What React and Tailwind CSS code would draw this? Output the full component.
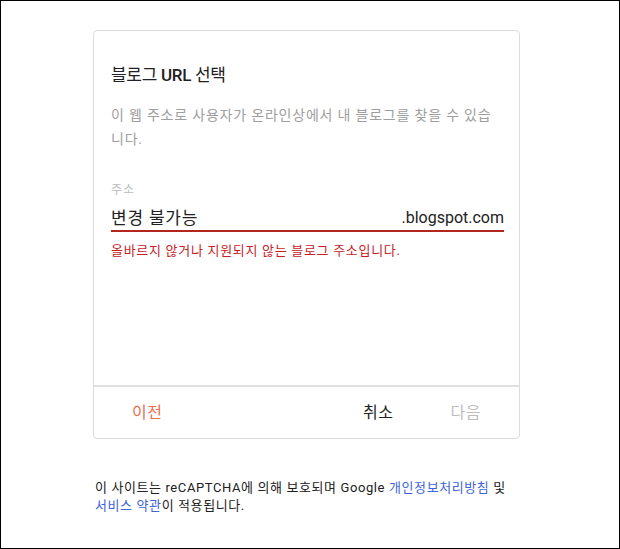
import React from 'react';

const font = { fontFamily: 'Roboto, "Noto Sans CJK KR", "Noto Sans", sans-serif' };

const App = () => {
    return (
        <div className="w-[620px] h-[549px] border border-black bg-white overflow-hidden" style={font}>
            <div className="ml-[92px] mt-[29px] w-[427px]">
                <div className="h-[409px] rounded-[4px] border border-[#dadce0] flex flex-col">
                    <div className="flex-1 pl-[17px] pr-[15px] pt-[32px]">
                        <h2 className="text-[17px] leading-[24px] tracking-[-0.3px] text-[#212121]">
                            블로그 <span className="font-medium">URL</span> 선택
                        </h2>
                        <p className="mt-[16px] text-[14px] leading-[24px] tracking-[0.8px] text-[#9e9e9e]">
                            이 웹 주소로 사용자가 온라인상에서 내 블로그를 찾을 수 있습니다.
                        </p>
                        <div className="mt-[31px] text-[12px] leading-[16px] tracking-[1px] text-[#bdbdbd]">주소</div>
                        <div className="mt-[8px] flex items-end justify-between border-b-2 border-[#b3261e] h-[26px]">
                            <span className="text-[17px] leading-[24px] tracking-[0.8px] text-[#212121]">변경 불가능</span>
                            <span className="text-[16px] leading-[24px] text-[#212121]">.blogspot.com</span>
                        </div>
                        <div className="mt-[11px] text-[13px] leading-[16px] tracking-[0.7px] text-[#c5221f]">
                            올바르지 않거나 지원되지 않는 블로그 주소입니다.
                        </div>
                    </div>
                    <div className="h-[53px] border-t-2 border-[#e0e0e0] flex items-center px-[18px]">
                        <button className="px-5 text-[16px] tracking-[0.5px] text-[#e8704f]">이전</button>
                        <div className="flex-1" />
                        <button className="px-5 text-[16px] tracking-[0.5px] text-[#212121]">취소</button>
                        <button className="ml-[17px] px-5 text-[16px] tracking-[0.5px] text-[#bdbdbd]">다음</button>
                    </div>
                </div>
                <div className="mt-[40px] ml-[2px] text-[13px] leading-[18px] tracking-[0.6px] text-[#212121]">
                    <p className="whitespace-nowrap">
                        이 사이트는 reCAPTCHA에 의해 보호되며 Google{' '}
                        <a className="text-[#3e64d8]">개인정보처리방침</a> 및
                    </p>
                    <p className="whitespace-nowrap">
                        <a className="text-[#3e64d8]">서비스 약관</a>이 적용됩니다.
                    </p>
                </div>
            </div>
        </div>
    );
};

export default App;
